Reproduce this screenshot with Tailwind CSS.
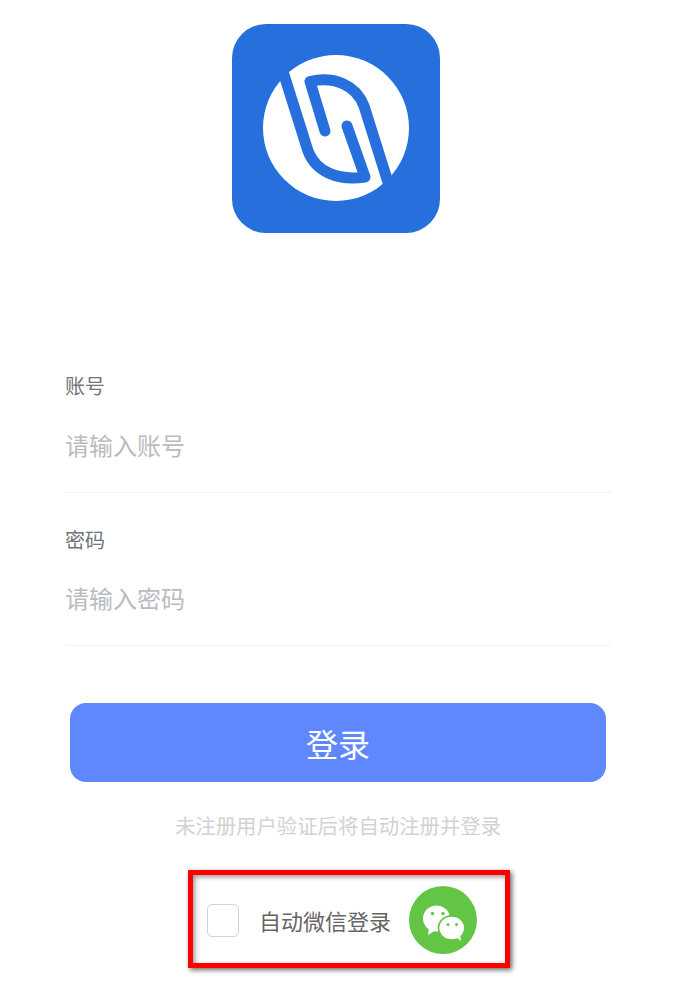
<!DOCTYPE html>
<html lang="zh-CN">
<head>
    <meta charset="UTF-8">
    <meta name="viewport" content="width=device-width, initial-scale=1.0">
    <title>登录</title>
    <script src="https://cdn.jsdelivr.net/npm/@tailwindcss/browser@4"></script>
</head>
<body class="bg-white font-['Noto_Sans_CJK_SC',sans-serif]">
    <div class="w-[676px] h-[997px] overflow-hidden flex flex-col">
        <!-- Logo -->
        <div class="pt-[24px] pl-[232px]">
            <svg class="block w-[208px] h-[209px] blur-[0.6px]" viewBox="0 0 208 209">
                <rect width="208" height="209" rx="34" fill="#266fdc"/>
                <circle cx="104" cy="104" r="73" fill="#fff"/>
                <g fill="none" stroke="#266fdc" stroke-width="11" stroke-linecap="round" stroke-linejoin="round">
                    <path d="M48 38 L76 127 C84 148 106 157 133 153 L115 102"/>
                    <path d="M160 171 L132 82 C124 61 102 52 78 57.500 L93 107"/>
                </g>
            </svg>
        </div>

        <!-- Form -->
        <div class="mt-[140px] ml-[65px] w-[547px]">
            <div class="h-[120px] border-b border-[#f4f4f4]">
                <label class="block text-[20px] leading-[26px] text-[#70747c]">账号</label>
                <div class="mt-[28px] text-[24px] leading-[36px] text-[#b9bbc0]">请输入账号</div>
            </div>
            <div class="mt-[34px] h-[119px] border-b border-[#f4f4f4]">
                <label class="block text-[20px] leading-[26px] text-[#70747c]">密码</label>
                <div class="mt-[27px] text-[24px] leading-[36px] text-[#b9bbc0]">请输入密码</div>
            </div>
        </div>

        <!-- Login -->
        <button class="mt-[57px] ml-[70px] w-[536px] h-[79px] rounded-[16px] bg-[#5f88ff] text-white text-[32px] leading-none">登录</button>
        <p class="mt-[28px] text-center text-[20.400px] leading-[30px] text-[#d2d2d2]">未注册用户验证后将自动注册并登录</p>

        <!-- Auto WeChat login -->
        <div class="mt-[30px] ml-[188px] w-[322px] h-[98px] border-[5px] border-[#ff0000] shadow-[2px_2px_5px_rgba(0,0,0,0.6),inset_2px_2px_5px_rgba(0,0,0,0.4)] flex items-center pl-[14px] pt-[1px]">
            <span class="mt-[2px] w-[32px] h-[33px] rounded-[5px] border border-[#d4d4d4] bg-white"></span>
            <span class="ml-[20px] text-[22px] leading-[32px] text-[#666666]">自动微信登录</span>
            <svg class="ml-[18px] w-[68px] h-[68px]" viewBox="0 0 68 68">
                <circle cx="34" cy="34" r="34" fill="#62c545"/>
                <ellipse cx="27.500" cy="32.500" rx="13.500" ry="13" fill="#fff"/>
                <path d="M20 42 L19 49 L27 44 Z" fill="#fff"/>
                <ellipse cx="42.700" cy="42" rx="14" ry="13" fill="#62c545"/>
                <ellipse cx="42.700" cy="42" rx="12.300" ry="11.300" fill="#fff"/>
                <path d="M47 51 L52 55 L51 48 Z" fill="#fff"/>
                <circle cx="23.500" cy="27.500" r="1.700" fill="#62c545"/>
                <circle cx="34" cy="27.500" r="1.700" fill="#62c545"/>
                <circle cx="39" cy="38.500" r="1.500" fill="#62c545"/>
                <circle cx="47.500" cy="38.500" r="1.500" fill="#62c545"/>
            </svg>
        </div>
    </div>
</body>
</html>
